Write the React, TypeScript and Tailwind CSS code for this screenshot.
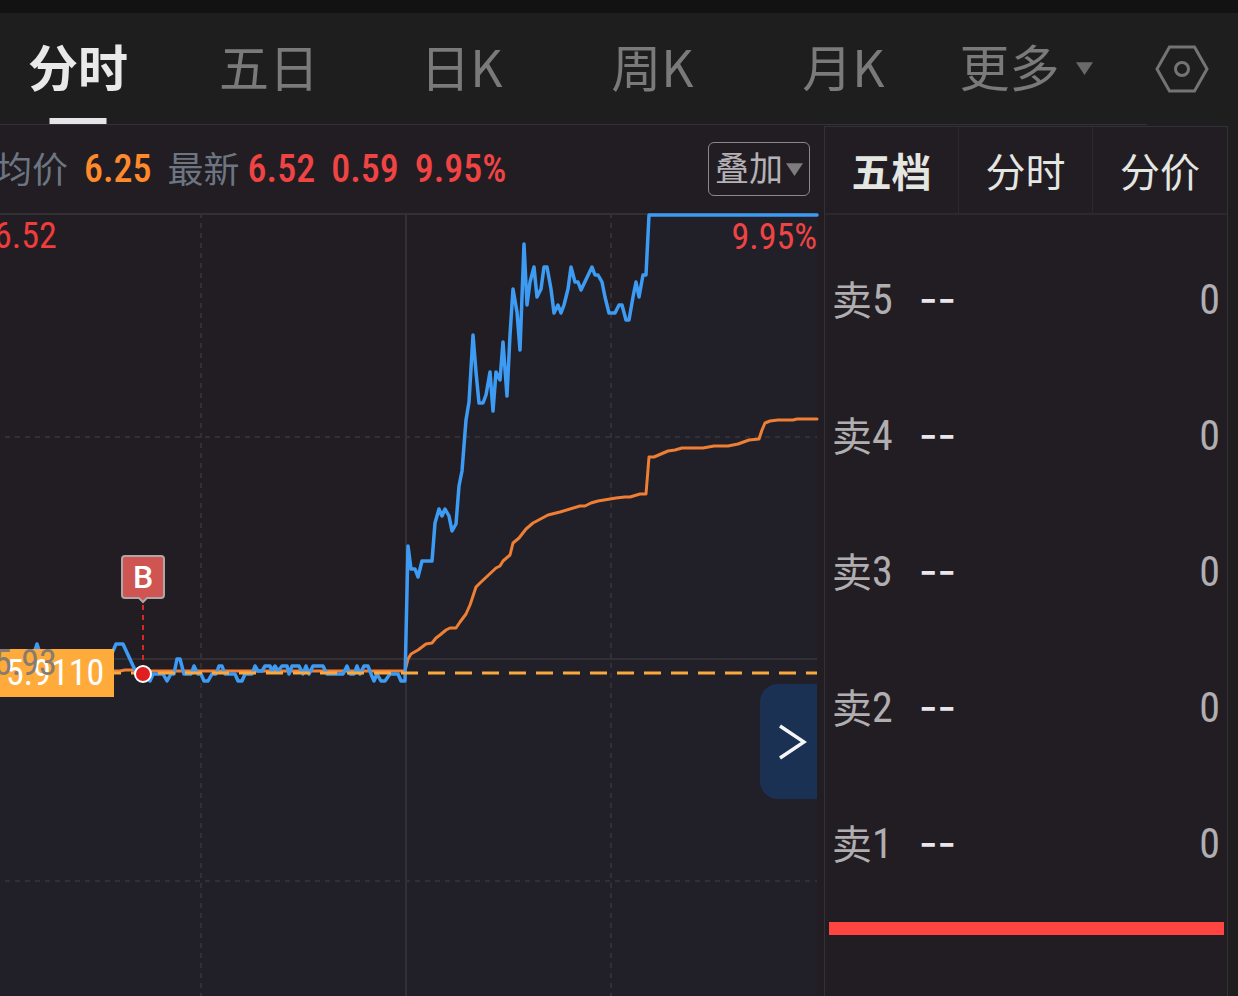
const NUM = "font-['Roboto_Condensed','Roboto','Noto_Sans_CJK_SC',sans-serif]";

const periods = ["五日", "日K", "周K", "月K"];
const asks = [5, 4, 3, 2, 1];

const earlyPrice =
    "0,690 20,674 30,666 37,644 44,666 60,674 90,674 110,658 116,644 123,644 135,670 143,674 150,681 153,674 163,674 167,681 171,674 174,674 177,659 180,659 184,674 191,674 194,666 198,674 201,674 204,681 208,681 212,674 216,674 219,666 222,666 225,674 235,674 238,681 242,681 245,674 252,674 255,666 258,671 262,671 265,666 270,666 272,671 275,666 278,671 282,666 287,666 289,674 292,666 299,666 303,674 306,666 309,674 313,666 323,666 327,674 343,674 347,666 350,674 354,674 357,666 360,674 364,666 368,666 371,674 374,681 377,674 381,681 385,681 390,674 398,674 401,681 405,681";

const latePrice =
    "408,546 411,569 415,569 418,577 422,561 432,561 435,523 439,509 442,516 445,509 449,516 452,531 456,524 459,486 462,471 466,420 469,402 473,335 476,372 479,403 483,403 486,395 490,372 493,411 496,372 500,380 503,342 507,396 510,335 513,289 517,312 520,350 524,244 527,305 530,282 534,267 537,297 541,289 544,267 547,267 551,289 554,313 558,305 561,313 564,305 568,289 571,267 575,282 578,282 581,290 592,267 595,275 598,275 602,282 605,297 609,313 615,313 619,305 622,305 626,320 629,320 633,297 636,282 639,297 643,275 646,275 649,215 817,215";

const average =
    "100,671 120,671 125,670 133,670 140,671 405,671 408,659 411,654 418,650 426,644 432,643 436,638 440,635 446,630 450,628 456,628 460,622 466,614 470,605 476,587 480,583 496,568 500,566 503,561 510,555 513,543 519,538 526,529 533,523 548,515 560,512 580,506 585,506 591,503 598,501 610,499 616,498 625,497 630,497 640,494 646,494 649,457 654,457 661,454 668,451 675,450 682,448 703,448 714,446 728,446 738,444 749,440 759,439 762,430 765,423 770,421 778,420 793,420 797,419 817,419";

const Caret = ({ className }: { className: string }) => (
    <svg className={className} viewBox="0 0 16 12" fill="currentColor" aria-hidden="true">
        <polygon points="0,0 16,0 8,12" />
    </svg>
);

const PeriodTabs = () => {
    return (
        <nav className="grid h-[111px] grid-cols-[172fr_194fr_191fr_191fr_191fr_174fr_125fr] items-stretch bg-[#1e1e1e] text-[50px] leading-none text-[#7a7a7a]">
            <button className="flex items-center pr-4 pb-2 justify-center font-bold text-[#e9e9e9]">
                <span className="relative flex h-full items-center">
                    分时
                    <span className="absolute -bottom-2 left-1/2 h-[6px] w-[57px] -translate-x-1/2 bg-[#e6e4e8]"></span>
                </span>
            </button>
            {periods.map((p) => (
                <button key={p} className="flex items-center justify-center pb-2">{p}</button>
            ))}
            <button className="flex items-center justify-center gap-4">
                <span className="pb-2">更多</span>
                <Caret className="h-[13px] w-[17px] text-[#6a6a6a]" />
            </button>
            <button aria-label="设置" className="flex items-center justify-center pl-3">
                <svg className="h-[48px] w-[54px]" viewBox="0 0 54 48" fill="none" stroke="#747474" strokeWidth="3">
                    <polygon points="14.5,2 39.5,2 52,24 39.5,46 14.5,46 2,24" />
                    <circle cx="27" cy="24" r="6.5" />
                </svg>
            </button>
        </nav>
    );
};

const QuoteBar = () => {
    return (
        <div className="-ml-1 flex h-[88px] items-center justify-between pr-[14px]">
            <div className="flex items-center gap-4 text-[38px] leading-none whitespace-nowrap">
                <span className="pb-1 text-[36px] text-[#6c7682]">均价</span>
                <span className={`${NUM} font-medium text-[#ff8a2b]`}>6.25</span>
                <span className="flex items-center gap-2">
                    <span className="pb-1 text-[36px] text-[#6c7682]">最新</span>
                    <span className={`${NUM} font-medium text-[#f04444]`}>6.52</span>
                </span>
                <span className={`${NUM} font-medium text-[#f04444]`}>0.59</span>
                <span className={`${NUM} font-medium text-[#f04444]`}>9.95%</span>
            </div>
            <button className="flex h-[54px] items-center gap-[3px] rounded-md border border-[#8a888d] px-[6px] text-[34px] leading-none text-[#b4b2b6]">
                <span className="pb-1">叠加</span>
                <Caret className="h-[13px] w-[17px] text-[#7d7d7d]" />
            </button>
        </div>
    );
};

const TrendChart = () => {
    return (
        <div className="relative">
            <svg className={`block w-full ${NUM}`} viewBox="0 213 824 783" fill="none">
                <polygon points={`0,996 ${earlyPrice} ${latePrice} 817,996`} fill="#212028" />

                {/* grid */}
                <g stroke="#323034" strokeWidth="2">
                    <path d="M0 214H818M406 214V996M0 659H817" />
                    <path d="M201 213V996M611 213V996M5 437H817M5 881H817" strokeDasharray="5 5" />
                </g>

                <polyline points={average} stroke="#ee7f34" strokeWidth="3" strokeLinejoin="round" strokeLinecap="round" />
                <polyline points={`${earlyPrice} ${latePrice}`} stroke="#3d9bf3" strokeWidth="3.5" strokeLinejoin="round" strokeLinecap="round" />
                <path d="M104 673H817" stroke="#fba93c" strokeWidth="3" strokeDasharray="17 10" />

                {/* cost label */}
                <rect x="0" y="649" width="114" height="48" fill="#ffab3b" />
                <text x="6" y="685" fontSize="36" fill="#fff">5.9110</text>
                <text x="-6" y="675" fontSize="36" fill="#877c70">5.93</text>

                <text x="-6" y="248" fontSize="36" fill="#f03c3c">6.52</text>
                <text x="817" y="249" fontSize="36" fill="#f04444" textAnchor="end">9.95%</text>

                {/* buy marker */}
                <path d="M143 605V666" stroke="#dc2626" strokeWidth="2" strokeDasharray="5 5" />
                <path d="M125 556H161Q164 556 164 559V595Q164 598 161 598H147L143 602L139 598H125Q122 598 122 595V559Q122 556 125 556Z" fill="#cf5552" stroke="#b0a5a8" strokeWidth="2" />
                <text className="font-['Roboto',sans-serif] font-medium" x="143" y="588" fontSize="32" fill="#fff" textAnchor="middle">B</text>
                <circle cx="143" cy="674" r="8" fill="#e01f21" stroke="#fff" strokeWidth="2" />
            </svg>
            <button aria-label="展开" className="absolute top-[60.2%] right-[7px] flex h-[115px] w-[57px] items-center justify-center rounded-l-[18px] bg-[#1a3153]">
                <svg className="ml-2 h-[36px] w-[28px]" viewBox="0 0 28 36" fill="none" stroke="#f4f6fa" strokeWidth="3.5">
                    <polyline points="1,2 25,18 1,34" />
                </svg>
            </button>
        </div>
    );
};

const OrderBook = () => {
    return (
        <aside className="mt-px mr-[10px] w-[404px] shrink-0 border-x border-t border-[#333135]">
            <div className="grid h-[88px] grid-cols-3 divide-x divide-[#2b292d] border-b-2 border-[#2b292d] text-[40px] leading-none text-[#e4e6e2]">
                <button className="font-bold">五档</button>
                <button>分时</button>
                <button>分价</button>
            </div>
            <table className="mt-[17px] w-full text-[42px] leading-none text-[#b0aeb1]">
                <tbody>
                    {asks.map((n) => (
                        <tr key={n} className="h-[136px]">
                            <th scope="row" className="w-[94px] pl-[7px] font-normal">
                                <span className="flex items-center">
                                    <span className="pb-1 text-[40px]">卖</span>
                                    <span className={NUM}>{n}</span>
                                </span>
                            </th>
                            <td className="pb-[2px] font-['Inter',sans-serif] text-[40px] font-medium text-[#e8e6ea]">--</td>
                            <td className={`${NUM} pr-[7px] text-right`}>0</td>
                        </tr>
                    ))}
                </tbody>
            </table>
            <div className="mt-[10px] mr-[3px] ml-1 h-[13px] bg-[#ff4542]"></div>
        </aside>
    );
};

const App = () => {
    return (
        <div className="flex min-h-screen flex-col overflow-hidden bg-[#1e1e1e] font-['Noto_Sans_CJK_SC',sans-serif]">
            <div className="h-[13px] bg-[#121212]"></div>
            <PeriodTabs />
            <div className="mr-[91px] h-px bg-[#333333]"></div>
            <main className="flex flex-1 bg-[linear-gradient(to_left,#1e1e1e_10px,#221d22_10px)]">
                <section className="min-w-0 flex-1">
                    <QuoteBar />
                    <TrendChart />
                </section>
                <OrderBook />
            </main>
        </div>
    );
};

export default App;
